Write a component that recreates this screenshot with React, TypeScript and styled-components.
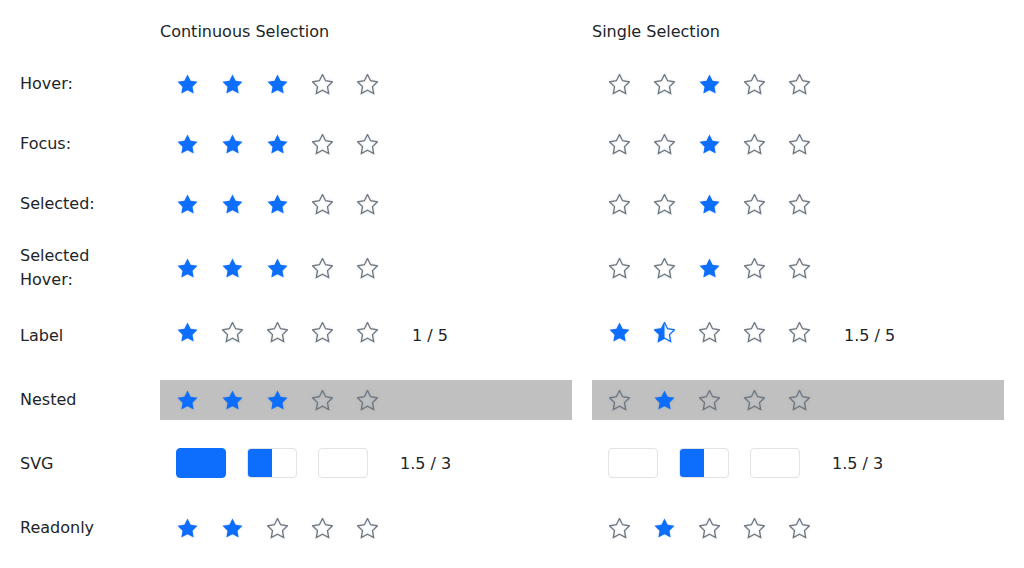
import React from 'react';
import styled, { createGlobalStyle } from 'styled-components';

const BLUE = '#0d6efd';
const GREY = '#6c757d';
const STAR = 'M12 2l3.09 6.26L22 9.27l-5 4.87 1.18 6.88L12 17.77l-6.18 3.25L7 14.14 2 9.27l6.91-1.01L12 2z';

type Fill = 'full' | 'half' | 'empty';

const GlobalStyle = createGlobalStyle`
  html, body {
    margin: 0;
    padding: 0;
    background: #ffffff;
    font-family: "DejaVu Sans", "Liberation Sans", sans-serif;
    font-size: 16px;
    line-height: 24px;
    color: #212529;
  }
`;

const Star = ({ fill }: { fill: Fill }) => (
  <StarSvg viewBox="1.5 1.5 21 21">
    {fill === 'full' && <path d={STAR} fill={BLUE} />}
    {fill === 'empty' && (
      <path d={STAR} fill="none" stroke={GREY} strokeWidth={1.3} strokeLinejoin="miter" />
    )}
    {fill === 'half' && (
      <>
        <clipPath id="half-clip">
          <rect x="0" y="0" width="12" height="24" />
        </clipPath>
        <path d={STAR} fill="none" stroke={BLUE} strokeWidth={1.3} />
        <path d={STAR} fill={BLUE} clipPath="url(#half-clip)" />
      </>
    )}
  </StarSvg>
);

const Stars = ({ fills, value, nested }: { fills: Fill[]; value?: string; nested?: boolean }) => (
  <RatingRow nested={nested}>
    {fills.map((f, i) => (
      <StarCell key={i}>
        <Star fill={f} />
      </StarCell>
    ))}
    {value && <Value>{value}</Value>}
  </RatingRow>
);

const Boxes = ({ fills, value }: { fills: Fill[]; value: string }) => (
  <RatingRow>
    {fills.map((f, i) => (
      <BoxCell key={i}>
        <Box filled={f === 'full'}>{f === 'half' && <HalfFill />}</Box>
      </BoxCell>
    ))}
    <Value>{value}</Value>
  </RatingRow>
);

const F = 'full' as Fill;
const H = 'half' as Fill;
const E = 'empty' as Fill;

const App = () => {
  return (
    <>
      <GlobalStyle />
      <Page>
        <span />
        <ColumnTitle>Continuous Selection</ColumnTitle>
        <ColumnTitle>Single Selection</ColumnTitle>

        <RowLabel>Hover:</RowLabel>
        <Stars fills={[F, F, F, E, E]} />
        <Stars fills={[E, E, F, E, E]} />

        <RowLabel>Focus:</RowLabel>
        <Stars fills={[F, F, F, E, E]} />
        <Stars fills={[E, E, F, E, E]} />

        <RowLabel>Selected:</RowLabel>
        <Stars fills={[F, F, F, E, E]} />
        <Stars fills={[E, E, F, E, E]} />

        <RowLabel>Selected Hover:</RowLabel>
        <Stars fills={[F, F, F, E, E]} />
        <Stars fills={[E, E, F, E, E]} />

        <RowLabel>Label</RowLabel>
        <Stars fills={[F, E, E, E, E]} value="1 / 5" />
        <Stars fills={[F, H, E, E, E]} value="1.5 / 5" />

        <RowLabel>Nested</RowLabel>
        <Stars fills={[F, F, F, E, E]} nested />
        <Stars fills={[E, F, E, E, E]} nested />

        <RowLabel>SVG</RowLabel>
        <Boxes fills={[F, H, E]} value="1.5 / 3" />
        <Boxes fills={[E, H, E]} value="1.5 / 3" />

        <RowLabel>Readonly</RowLabel>
        <Stars fills={[F, F, E, E, E]} />
        <Stars fills={[E, F, E, E, E]} />
      </Page>
    </>
  );
};

export default App;

const Page = styled.div`
  display: grid;
  grid-template-columns: 120px 412px 412px;
  column-gap: 20px;
  row-gap: 20px;
  padding: 20px;
  align-items: center;
`;

const ColumnTitle = styled.div`
  height: 24px;
`;

const RowLabel = styled.div`
  padding-right: 10px;
`;

const RatingRow = styled.div<{ nested?: boolean }>`
  display: flex;
  align-items: flex-start;
  min-height: 40px;
  padding-left: 5px;
  background: ${(p) => (p.nested ? '#c0c0c0' : 'transparent')};
`;

const StarCell = styled.span`
  display: flex;
  align-items: center;
  justify-content: center;
  width: 45px;
  height: 40px;
`;

const StarSvg = styled.svg`
  width: 21px;
  height: 21px;
  filter: drop-shadow(0 0 1.5px rgba(13, 40, 90, 0.12));
`;

const BoxCell = styled.span`
  display: flex;
  align-items: center;
  height: 46px;
  padding: 0 10.5px;
`;

const Box = styled.span<{ filled?: boolean }>`
  display: block;
  position: relative;
  width: 50px;
  height: 30px;
  box-sizing: border-box;
  border-radius: 4px;
  overflow: hidden;
  background: ${(p) => (p.filled ? BLUE : '#ffffff')};
  border: 1px solid ${(p) => (p.filled ? BLUE : '#e3e3e3')};
`;

const HalfFill = styled.span`
  position: absolute;
  left: -1px;
  top: -1px;
  bottom: -1px;
  width: 25px;
  background: ${BLUE};
`;

const Value = styled.span`
  margin-left: 22px;
  padding: 12px 0;
`;
